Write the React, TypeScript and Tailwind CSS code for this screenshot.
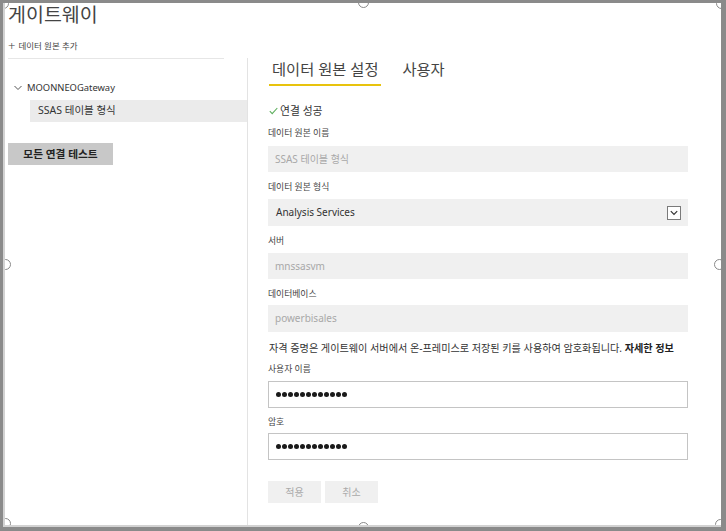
import React from "react";

function Label({ children, className = "" }: { children: React.ReactNode; className?: string }) {
  return <div className={`text-[8.8px] leading-[12px] text-[#444] ${className}`}>{children}</div>;
}

function GrayInput({ value, className = "" }: { value: string; className?: string }) {
  return (
    <div className={`h-[26px] bg-[#f0f0f0] flex items-center pl-[7px] text-[10px] text-[#a8a8a8] ${className}`}>{value}</div>
  );
}

function Dots() {
  return (
    <div className="flex gap-[1.5px]">
      {Array.from({ length: 12 }).map((_, i) => (
        <div key={i} className="w-[4.5px] h-[4.5px] rounded-full bg-[#1a1a1a]" />
      ))}
    </div>
  );
}

function PwInput({ className = "" }: { className?: string }) {
  return (
    <div className={`h-[27px] bg-white border border-[#c4c4c4] flex items-center pl-[7px] ${className}`}>
      <Dots />
    </div>
  );
}

function Handle({ className }: { className: string }) {
  return <div className={`absolute w-[11px] h-[11px] rounded-full bg-white border-[1.5px] border-[#8a8a8a] ${className}`} />;
}

export default function App() {
  return (
    <div className="relative w-[726px] h-[531px] bg-white overflow-hidden font-['Noto_Sans','Noto_Sans_CJK_KR',sans-serif] text-[#333]">
      <div className="pt-[3px] pl-[3px] flex flex-col h-full">
        {/* header */}
        <div className="pl-[5px] text-[19.5px] leading-[23px] text-[#444]">게이트웨이</div>
        <div className="pl-[5px] mt-[14px] h-[12px] flex items-center text-[8.5px] text-[#444]">
          <span className="text-[13px] leading-[12px] mr-[3px] font-light">+</span>
          데이터 원본 추가
        </div>
        <div className="flex flex-1 mt-[6px]">
          {/* left panel */}
          <div className="w-[244px] shrink-0 flex flex-col">
            <div className="ml-[5px] w-[216px] h-px bg-[#e6e6e6]" />
            <div className="mt-[22px] h-[14px] flex items-center pl-[11px] text-[9.4px] text-[#333]">
              <svg width="8" height="6" viewBox="0 0 8 6" className="mr-[5px]">
                <path d="M0.5 1 L4 4.5 L7.5 1" fill="none" stroke="#555" strokeWidth="1" />
              </svg>
              MOONNEOGateway
            </div>
            <div className="mt-[5px] ml-[27px] h-[22px] bg-[#ebebeb] flex items-center pl-[8px] text-[10.5px] text-[#333]">
              SSAS 테이블 형식
            </div>
            <div className="mt-[21px] ml-[5px] w-[105px] h-[22px] bg-[#c8c8c8] flex items-center justify-center text-[10.7px] font-bold text-[#222]">
              모든 연결 테스트
            </div>
          </div>
          {/* right panel */}
          <div className="flex-1 border-l border-[#e3e3e3] pl-[20px] pr-[38px] flex flex-col">
            <div className="flex mt-px">
              <div className="ml-px px-[3px] pb-[5px] border-b-2 border-[#e8c30d] text-[15.3px] leading-[20px] text-[#444]">데이터 원본 설정</div>
              <div className="ml-[18px] px-[3px] text-[15.3px] leading-[20px] text-[#444]">사용자</div>
            </div>
            <div className="mt-[18px] h-[14px] flex items-center pl-px text-[10.8px] text-[#333]">
              <svg width="9" height="8" viewBox="0 0 9 8" className="mr-[2px]">
                <path d="M0.8 4.2 L3.2 6.6 L8.3 1" fill="none" stroke="#5cae5c" strokeWidth="1.1" />
              </svg>
              연결 성공
            </div>
            <Label className="mt-[9px]">데이터 원본 이름</Label>
            <GrayInput value="SSAS 테이블 형식" className="mt-[7px] h-[25px]" />
            <Label className="mt-[9px]">데이터 원본 형식</Label>
            <div className="mt-[6px] h-[27px] bg-[#f0f0f0] flex items-center justify-between pl-[8px] pr-[7px] text-[10px] text-[#333]">
              <span>Analysis Services</span>
              <div className="w-[14px] h-[14px] border border-[#7a7a7a] bg-white flex items-center justify-center">
                <svg width="8" height="6" viewBox="0 0 8 6">
                  <path d="M0.8 1.2 L4 4.4 L7.2 1.2" fill="none" stroke="#333" strokeWidth="1.2" />
                </svg>
              </div>
            </div>
            <Label className="mt-[9px]">서버</Label>
            <GrayInput value="mnssasvm" className="mt-[6px]" />
            <Label className="mt-[9px]">데이터베이스</Label>
            <GrayInput value="powerbisales" className="mt-[5px] h-[27px]" />
            <div className="mt-[9px] leading-[14px] text-[10.15px] text-[#333] whitespace-nowrap pl-px">
              자격 증명은 게이트웨이 서버에서 온-프레미스로 저장된 키를 사용하여 암호화됩니다. <span className="font-bold text-[#222]">자세한 정보</span>
            </div>
            <Label className="mt-[8px]">사용자 이름</Label>
            <PwInput className="mt-[6px]" />
            <Label className="mt-[8px]">암호</Label>
            <PwInput className="mt-[5px]" />
            <div className="mt-[21px] flex gap-[4px]">
              <div className="w-[53px] h-[22px] bg-[#f0f0f0] flex items-center justify-center text-[10px] text-[#aaa]">적용</div>
              <div className="w-[53px] h-[22px] bg-[#f0f0f0] flex items-center justify-center text-[10px] text-[#aaa]">취소</div>
            </div>
          </div>
        </div>
      </div>
      {/* selection handles */}
      <Handle className="left-[-2px] top-[-2px]" />
      <Handle className="left-[358px] top-[-3px]" />
      <Handle className="right-[-1px] top-[-2px]" />
      <Handle className="left-[0px] top-[259px]" />
      <Handle className="right-[1px] top-[259px]" />
      <Handle className="left-[0px] bottom-[2px]" />
      <Handle className="left-[358px] bottom-[-2px]" />
      <Handle className="right-[0px] bottom-[1px]" />
      {/* frame */}
      <div className="absolute inset-0 pointer-events-none border-t-[3px] border-l-[3px] border-r-[5px] border-b-[4px] border-[#8a8a8a]" />
      <div className="absolute left-[3px] top-[3px] bottom-[4px] w-[2px] bg-[#d2d2d2] pointer-events-none" />
      <div className="absolute left-[3px] right-[5px] bottom-[4px] h-[2px] bg-[#d2d2d2] pointer-events-none" />
    </div>
  );
}
